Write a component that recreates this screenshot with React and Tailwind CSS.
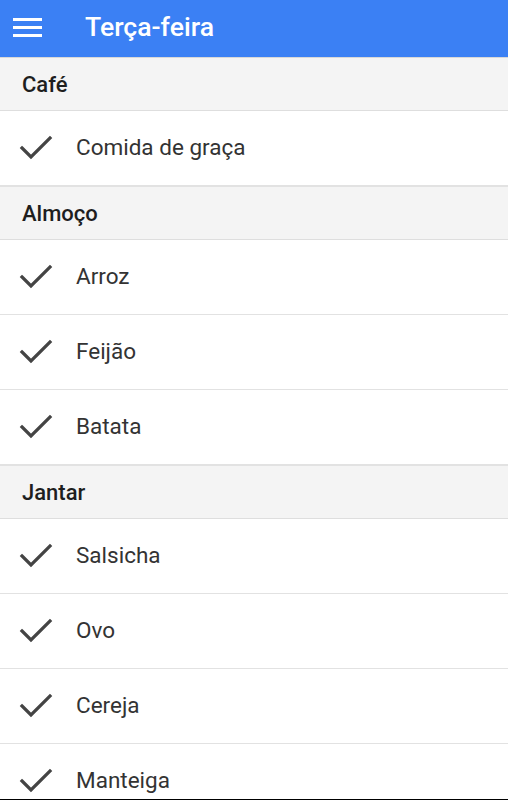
const sections = [
  { title: 'Café', items: ['Comida de graça'] },
  { title: 'Almoço', items: ['Arroz', 'Feijão', 'Batata'] },
  { title: 'Jantar', items: ['Salsicha', 'Ovo', 'Cereja', 'Manteiga'] },
]

function Check() {
  return (
    <svg width="34" height="30" viewBox="0 0 34 30" className="shrink-0">
      <polyline points="3,15 12,24 31,5" fill="none" stroke="#444" strokeWidth="3.2" strokeLinecap="square" />
    </svg>
  )
}

export default function App() {
  return (
    <div className="h-[800px] flex flex-col overflow-hidden bg-white font-['Roboto',sans-serif] border-b border-black">
      {/* Header */}
      <header className="h-[58px] shrink-0 bg-[#3b80f4] flex items-center pb-[3px] border-b border-[#d8d8d8]">
        <div className="w-[85px] pl-[13px] flex flex-col gap-[5px]">
          <span className="block w-[29px] h-[3px] bg-white" />
          <span className="block w-[29px] h-[3px] bg-white" />
          <span className="block w-[29px] h-[3px] bg-white" />
        </div>
        <h1 className="text-white text-[26.6px] font-medium">Terça-feira</h1>
      </header>

      <div className="flex-1 overflow-hidden">
        {sections.map((s) => (
          <section key={s.title} className="border-b border-[#e2e2e2]">
            <div className="h-[53px] bg-[#f4f4f4] border-b border-[#dedede] flex items-center pl-[22px] text-[22px] font-medium text-[#1e1e1e]">
              {s.title}
            </div>
            {s.items.map((item) => (
              <div key={item} className="h-[75px] border-b border-[#e2e2e2] flex items-center pl-[19px] gap-[23px]">
                <Check />
                <span className="text-[22.5px] text-[#333]">{item}</span>
              </div>
            ))}
          </section>
        ))}
      </div>
    </div>
  )
}
